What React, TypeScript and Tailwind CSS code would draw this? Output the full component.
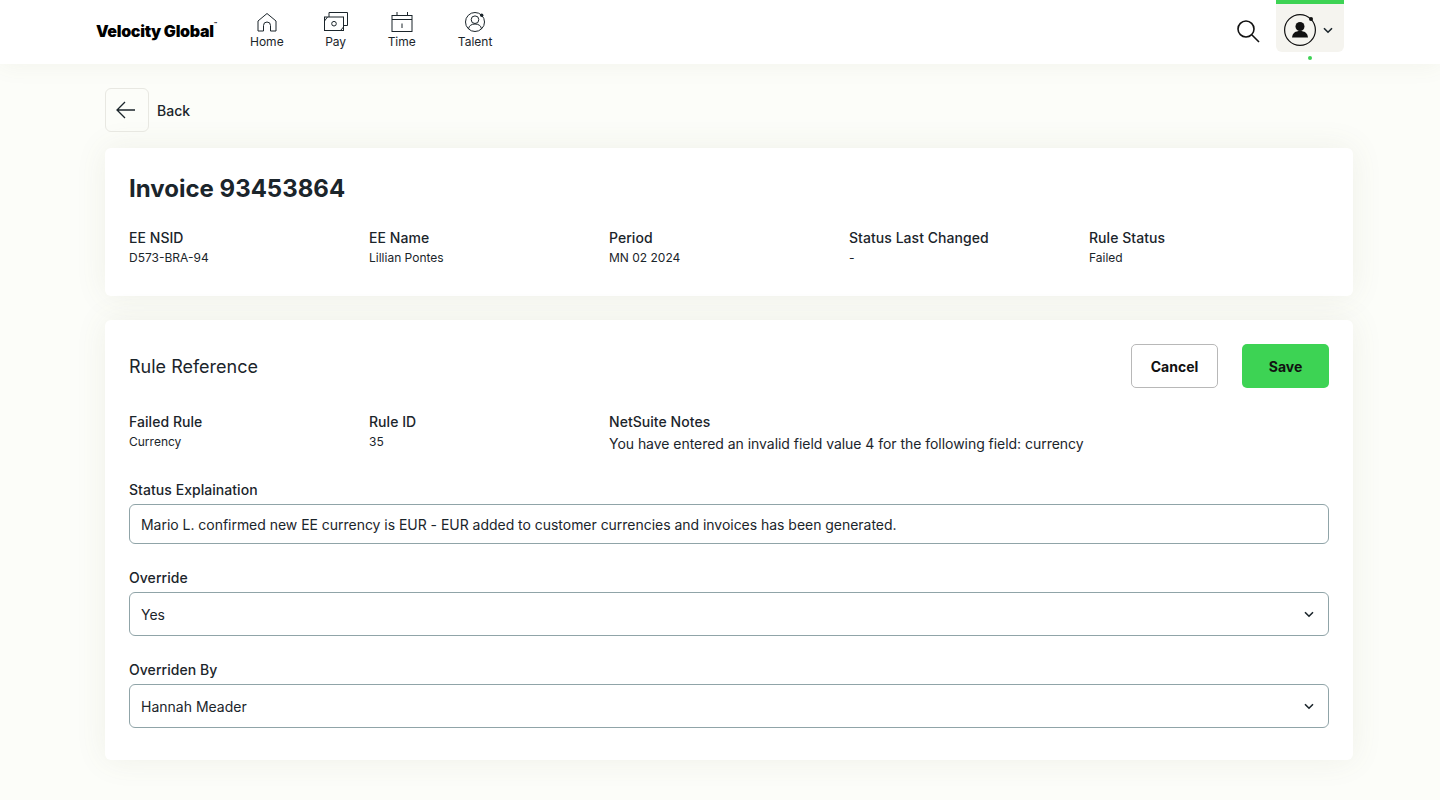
import React from 'react';

const ChevronDown = ({ className }: { className?: string }) => (
  <svg className={className} width="12" height="12" viewBox="0 0 12 12" fill="none" stroke="#1b252b" strokeWidth="1.6">
    <path d="M2 4.200 6 8.200l4-4" />
  </svg>
);

const HomeIcon = () => (
  <svg width="24" height="24" viewBox="0 0 24 24" fill="none" stroke="#1b252b" strokeWidth="1">
    <path d="M3 11 12 3.500l9 7.500v10H15.500V15.500a3.500 3.500 0 0 0-7 0V21H3z" />
  </svg>
);

const PayIcon = () => (
  <svg width="24" height="24" viewBox="0 0 24 24" fill="none" stroke="#1b252b" strokeWidth="1">
    <path d="M5 7V2.500H23.500V15.500H19.500" />
    <rect x="0.500" y="7" width="19" height="13.500" />
    <circle cx="10" cy="13.700" r="2.300" />
    <path d="M.5 11 3.500 7M19.500 17 16.500 20.500" />
  </svg>
);

const TimeIcon = () => (
  <svg width="24" height="24" viewBox="0 0 24 24" fill="none" stroke="#1b252b" strokeWidth="1">
    <rect x="2" y="5.500" width="20" height="16" />
    <path d="M2 9.500h20M7 2v3.500M17.500 2v3.500M12 13.500v4.500" />
  </svg>
);

const TalentIcon = () => (
  <svg width="24" height="24" viewBox="0 0 24 24" fill="none" stroke="#1b252b" strokeWidth="1">
    <circle cx="12" cy="12" r="9.500" />
    <circle cx="12" cy="9.700" r="3.800" />
    <path d="M5.500 19c.3-3.300 3-5 6.500-5s6.200 1.700 6.500 5" />
    <circle cx="18.700" cy="5.200" r="1.700" fill="#1b252b" stroke="none" />
  </svg>
);

const navItems = [
  { label: 'Home', icon: <HomeIcon />, className: '' },
  { label: 'Pay', icon: <PayIcon />, className: '' },
  { label: 'Time', icon: <TimeIcon />, className: '' },
  { label: 'Talent', icon: <TalentIcon />, className: 'ml-[2px]' },
];

const Field = ({ label, value }: { label: string; value: string }) => (
  <div className="w-[240px]">
    <div className="text-[14px] font-[450] leading-[20px] tracking-[0.05px] text-[#1b252b]">{label}</div>
    <div className="mt-[1px] text-[12px] leading-[18px] text-[#1b252b]">{value}</div>
  </div>
);

const Select = ({ label, value }: { label: string; value: string }) => (
  <div className="mt-[24px]">
    <div className="text-[14px] font-[450] leading-[20px] tracking-[0.05px] text-[#1b252b]">{label}</div>
    <div className="mt-[4px] flex h-[44px] items-center justify-between rounded-[6px] border border-[#90a4a8] bg-white pl-[11px] pr-[13px] text-[14px] text-[#1b252b]">
      <span>{value}</span>
      <ChevronDown />
    </div>
  </div>
);

const App = () => {
  return (
    <div className="min-h-[800px] bg-[#fcfdf9] font-['Inter',sans-serif]">
      <header className="relative z-10 flex h-[64px] items-center justify-between bg-white px-[96px] shadow-[0_0_24px_rgba(110,110,70,0.08)]">
        <div className="flex items-center">
          <div className="flex w-[154px] pb-[2px] text-[16px] font-black leading-none tracking-[-0.3px] text-black">
            Velocity Global<span className="-mt-[1px] text-[5px]">™</span>
          </div>
          <nav className="flex items-center gap-[40px] pb-[4px]">
            {navItems.map((item) => (
              <div key={item.label} className={`flex flex-col items-center ${item.className}`}>
                {item.icon}
                <span className="text-[12px] leading-[16px] text-[#1b252b]">{item.label}</span>
              </div>
            ))}
          </nav>
        </div>
        <div className="flex items-start self-start">
          <svg className="mt-[19px] mr-[16px]" width="24" height="24" viewBox="0 0 24 24" fill="none" stroke="#111" strokeWidth="1.6">
            <circle cx="10" cy="10" r="8" />
            <path d="m16 16 7 7" />
          </svg>
          <div className="relative flex h-[52px] w-[68px] items-center gap-[6px] rounded-b-[6px] border-t-[4px] border-[#3dd354] bg-[#f5f4ef] pl-[8px] pt-[4px]">
            <svg width="32" height="32" viewBox="0 0 32 32" fill="none" stroke="#111" strokeWidth="1.2">
              <circle cx="16" cy="16" r="15.400" />
              <circle cx="27" cy="5" r="2" fill="#111" stroke="none" />
              <circle cx="16" cy="12.500" r="4.500" fill="#111" stroke="none" />
              <path d="M8 23.500c.5-4.500 3.500-6.500 8-6.500s7.500 2 8 6.500z" fill="#111" stroke="none" />
            </svg>
            <ChevronDown />
            <span className="absolute left-[32px] top-[52px] h-[4px] w-[4px] rounded-full bg-[#3dd354]" />
          </div>
        </div>
      </header>

      <main className="ml-[105px] w-[1248px] pt-[24px]">
        <div className="flex items-center gap-[8px]">
          <div className="flex h-[44px] w-[44px] items-center justify-center rounded-[6px] border border-[#e8e8e2]">
            <svg width="24" height="24" viewBox="0 0 24 24" fill="none" stroke="#1b252b" strokeWidth="1.3">
              <path d="M20 12H2M10 4l-8 8 8 8" />
            </svg>
          </div>
          <span className="text-[14px] font-medium text-[#1b252b]">Back</span>
        </div>

        <section className="mt-[16px] h-[148px] rounded-[6px] bg-white p-[24px] shadow-[0_0_32px_rgba(110,110,70,0.09)]">
          <h1 className="text-[24px] font-bold leading-[34px] text-[#1b252b]">Invoice 93453864</h1>
          <div className="mt-[22px] flex">
            <Field label="EE NSID" value="D573-BRA-94" />
            <Field label="EE Name" value="Lillian Pontes" />
            <Field label="Period" value="MN 02 2024" />
            <Field label="Status Last Changed" value="-" />
            <Field label="Rule Status" value="Failed" />
          </div>
        </section>

        <section className="mt-[24px] h-[440px] rounded-[6px] bg-white p-[24px] shadow-[0_0_32px_rgba(110,110,70,0.09)]">
          <div className="flex h-[44px] items-center justify-between">
            <h2 className="text-[18px] font-normal text-[#1b252b]">Rule Reference</h2>
            <div className="flex gap-[24px]">
              <button className="h-[44px] w-[87px] rounded-[5px] border border-[#b8b8b8] bg-white text-[14px] font-bold text-[#111]">
                Cancel
              </button>
              <button className="h-[44px] w-[87px] rounded-[5px] bg-[#3dd354] text-[14px] font-bold text-[#111]">
                Save
              </button>
            </div>
          </div>

          <div className="mt-[24px] flex">
            <Field label="Failed Rule" value="Currency" />
            <Field label="Rule ID" value="35" />
            <div>
              <div className="text-[14px] font-[450] leading-[20px] tracking-[0.05px] text-[#1b252b]">NetSuite Notes</div>
              <div className="mt-[1px] text-[14px] leading-[22px] tracking-[-0.04px] text-[#1b252b]">
                You have entered an invalid field value 4 for the following field: currency
              </div>
            </div>
          </div>

          <div className="mt-[25px]">
            <div className="text-[14px] font-[450] leading-[20px] tracking-[0.05px] text-[#1b252b]">Status Explaination</div>
            <div className="mt-[4px] flex h-[40px] items-center rounded-[6px] border border-[#90a4a8] bg-white px-[11px] text-[14px] tracking-[-0.03px] text-[#1b252b]">
              Mario L. confirmed new EE currency is EUR - EUR added to customer currencies and invoices has been generated.
            </div>
          </div>

          <Select label="Override" value="Yes" />
          <Select label="Overriden By" value="Hannah Meader" />
        </section>
      </main>
    </div>
  );
};

export default App;
